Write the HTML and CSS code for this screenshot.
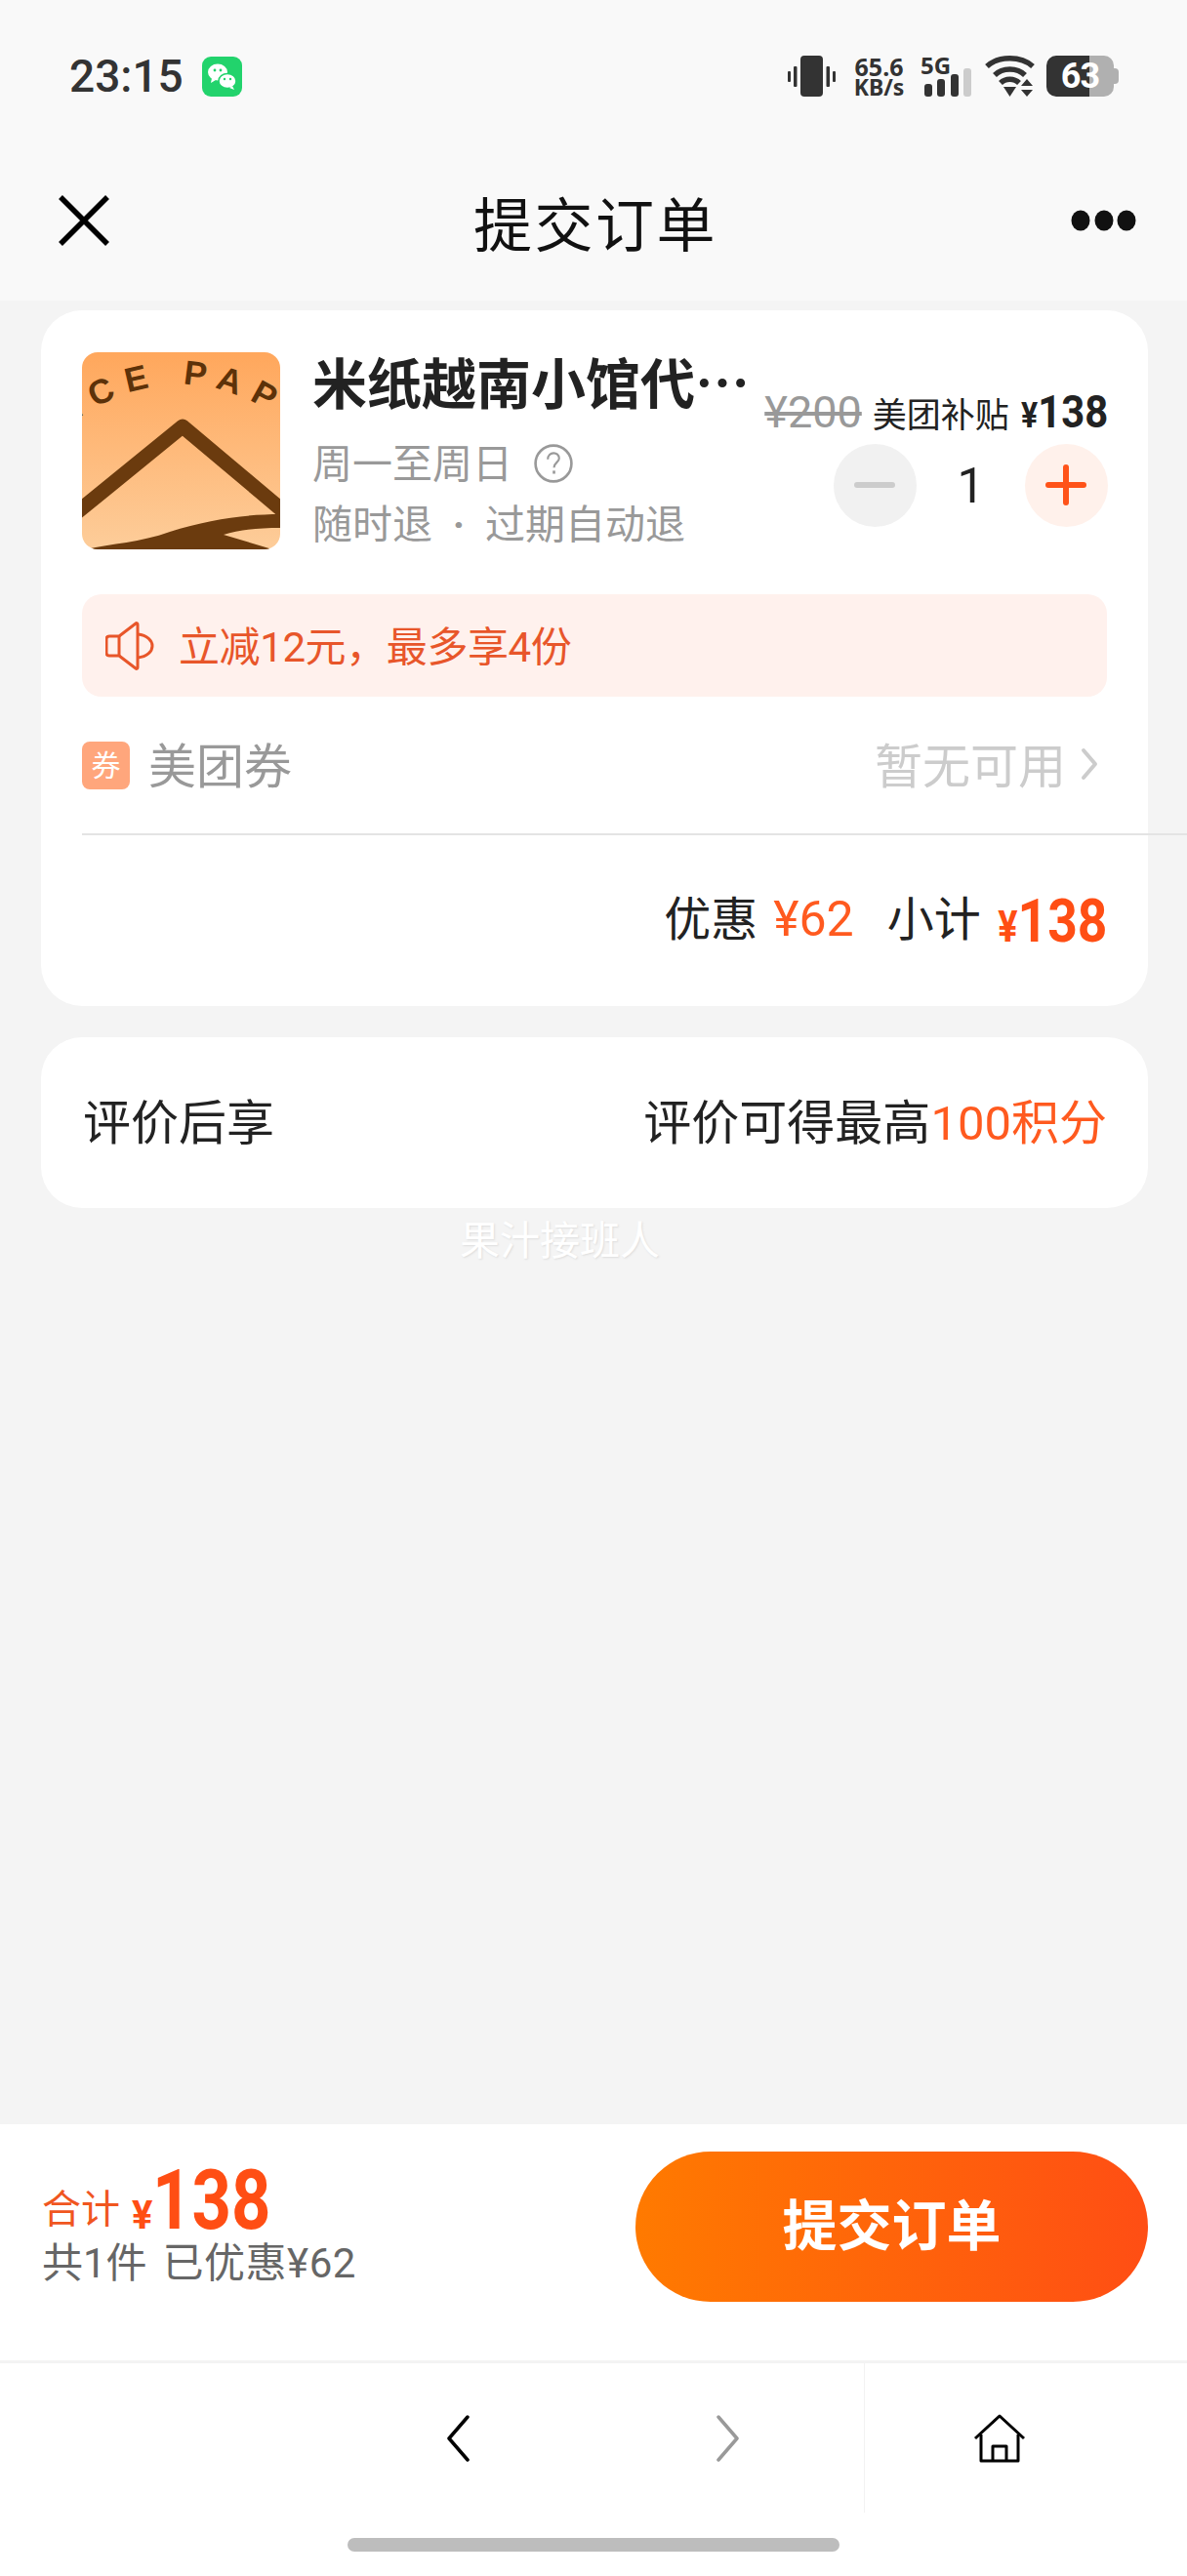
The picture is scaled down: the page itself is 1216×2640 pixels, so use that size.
FILE: index.html
```html
<!DOCTYPE html>
<html lang="zh-CN">
	<head>
		<meta charset="UTF-8" />
		<meta name="viewport" content="width=device-width, initial-scale=1.0" />
		<title>提交订单</title>
		<link rel="stylesheet" href="styles.css">
	</head>
	<body>
		<div id="page">
			<header class="top">
				<div class="status">
					<div class="status-left">
						<span class="time">23:15</span>
						<svg class="wechat" width="41" height="41" viewBox="0 0 41 41">
							<rect width="41" height="41" rx="9" fill="#22d36c"/>
							<ellipse cx="16" cy="16" rx="10" ry="8.5" fill="#fff"/>
							<path d="M10 22l-1 5 5-3z" fill="#fff"/>
							<ellipse cx="26" cy="25" rx="9" ry="7.5" fill="#fff" stroke="#22d36c" stroke-width="1.5"/>
							<path d="M31 30l2 4-5-2z" fill="#fff"/>
							<circle cx="13" cy="14" r="1.4" fill="#22d36c"/>
							<circle cx="19" cy="14" r="1.4" fill="#22d36c"/>
							<circle cx="23" cy="23" r="1.2" fill="#22d36c"/>
							<circle cx="29" cy="23" r="1.2" fill="#22d36c"/>
						</svg>
					</div>
					<div class="status-right">
						<svg width="49" height="42" viewBox="0 0 49 42" fill="#333">
							<rect x="13" y="0" width="23" height="42" rx="4"/>
							<rect x="0" y="16" width="3" height="11" rx="1"/>
							<rect x="6" y="11" width="3.5" height="21" rx="1"/>
							<rect x="39.5" y="11" width="3.5" height="21" rx="1"/>
							<rect x="46" y="16" width="3" height="11" rx="1"/>
						</svg>
						<div class="speed"><span>65.6</span><span>KB/s</span></div>
						<div class="signal">
							<span class="five-g">5G</span>
							<svg width="48" height="29" viewBox="0 0 48 29" fill="#333">
								<rect x="0" y="16" width="8" height="13" rx="3"/>
								<rect x="13" y="11" width="8" height="18" rx="3"/>
								<rect x="27" y="6" width="8" height="23" rx="3"/>
								<rect x="40" y="0" width="8" height="29" rx="3" fill="#ccc"/>
							</svg>
						</div>
						<svg class="wifi" width="51" height="42" viewBox="0 0 51 42">
							<g fill="none" stroke="#333" stroke-width="5.5">
								<path d="M2 11C14 0 37 0 49 11"/>
								<path d="M10 20C18 12 33 12 41 20"/>
								<path d="M16 28C21 23 30 23 35 28"/>
							</g>
							<path d="M19 32h13l-6.500 10z" fill="#333"/>
							<path d="M37 31l6-7 6 7z M37 35l6 7 6-7z" fill="#333"/>
						</svg>
						<div class="battery"><span class="battery-num">63</span></div>
					</div>
				</div>
				<nav class="navbar">
					<svg width="52" height="52" viewBox="0 0 52 52"><path d="M2 2l48 48M50 2L2 50" stroke="#000" stroke-width="5.500" fill="none"/></svg>
					<h1 class="title">提交订单</h1>
					<svg width="67" height="24" viewBox="0 0 67 24" fill="#111"><ellipse cx="10" cy="12" rx="9.500" ry="10.500"/><ellipse cx="34" cy="12" rx="9.500" ry="10.500"/><ellipse cx="57" cy="12" rx="9.500" ry="10.500"/></svg>
				</nav>
			</header>

			<main class="content">
				<section class="card order">
					<div class="goods">
						<svg class="thumb" width="203" height="202" viewBox="0 0 203 202">
							<defs>
								<linearGradient id="thumbBg" x1="0" y1="0" x2="0" y2="1">
									<stop offset="0" stop-color="#ffa75c"/>
									<stop offset="1" stop-color="#fdcd9a"/>
								</linearGradient>
								<path id="arc" d="M-40 96Q100 -30 240 96"/>
							</defs>
							<rect width="203" height="202" fill="url(#thumbBg)"/>
							<text class="thumb-text"><textPath href="#arc" startOffset="44">ICE PAPE</textPath></text>
							<path d="M-5 164L103 76L210 166" fill="none" stroke="#6b3b0e" stroke-width="15" stroke-linejoin="round"/>
							<path d="M4 202C30 196 60 195 90 184C130 171 170 166 203 166V180C180 180 160 182 145 187L195 202z" fill="#6b3b0e"/>
						</svg>
						<div class="goods-info">
							<div class="goods-name">米纸越南小馆代…</div>
							<div class="goods-sub">周一至周日
								<svg class="help" width="40" height="40" viewBox="0 0 38 38" fill="none" stroke="#999" stroke-width="2.500"><circle cx="19" cy="19" r="17.500"/><path d="M13.500 15c0-8 11-8 11-1 0 4-5 4-5 9" stroke-width="2"/><path d="M19.500 26v3" stroke-width="2.500"/></svg>
							</div>
							<div class="goods-sub">随时退<span class="sub-dot">·</span>过期自动退</div>
						</div>
						<div class="buy">
							<div class="prices">
								<s class="old-price">¥200</s>
								<span class="subsidy">美团补贴</span>
								<span class="new-price"><i>¥</i>138</span>
							</div>
							<div class="stepper">
								<span class="step minus"></span>
								<span class="qty">1</span>
								<span class="step plus"></span>
							</div>
						</div>
					</div>

					<div class="notice">
						<svg width="50" height="50" viewBox="0 0 50 50" fill="none" stroke="#e8562a" stroke-width="3" stroke-linejoin="round"><path d="M4 15h10L31 2c1-1 2 0 2 1v44c0 1-1 2-2 1L14 35H4c-2 0-3-1-3-3V18c0-2 1-3 3-3z"/><path d="M14 15v20"/><path d="M33 13c20 2 20 22 0 24"/></svg>
						<span class="notice-text">立减12元，最多享4份</span>
					</div>

					<div class="coupon">
						<span class="coupon-tag">券</span>
						<span class="coupon-name">美团券</span>
						<span class="coupon-state">暂无可用</span>
						<svg class="coupon-arrow" width="18" height="34" viewBox="0 0 18 34" fill="none" stroke="#ccc" stroke-width="4" stroke-linecap="round" stroke-linejoin="round"><path d="M3 3l12 14L3 31"/></svg>
					</div>

					<div class="divider"></div>

					<div class="sum">
						<span>优惠</span>
						<span class="discount">¥62</span>
						<span class="sum-label">小计</span>
						<span class="sum-total"><i>¥</i>138</span>
					</div>
				</section>

				<section class="card review">
					<span>评价后享</span>
					<span>评价可得最高<em>100积分</em></span>
				</section>

				<div class="watermark">果汁接班人</div>
			</main>

			<div class="submit-bar">
				<div class="total">
					<div class="total-line">
						<span class="total-label">合计</span>
						<span class="total-yen">¥</span>
						<span class="total-num">138</span>
					</div>
					<div class="total-note"><span>共1件</span><span class="total-saved">已优惠¥62</span></div>
				</div>
				<div class="submit-btn">提交订单</div>
			</div>

			<div class="browser-bar">
				<div class="arrows">
					<svg width="24" height="48" viewBox="0 0 24 48" fill="none" stroke="#000" stroke-width="3.500" stroke-linecap="round" stroke-linejoin="round"><path d="M22 2L3 24l19 22"/></svg>
					<svg width="24" height="48" viewBox="0 0 24 48" fill="none" stroke="#999" stroke-width="3.500" stroke-linecap="round" stroke-linejoin="round"><path d="M2 2l19 22L2 46"/></svg>
				</div>
				<div class="home">
					<svg width="54" height="50" viewBox="0 0 54 50" fill="none" stroke="#000" stroke-width="3" stroke-linejoin="round"><path d="M2 25L27 2l25 23"/><path d="M8 21v27h38V21"/><path d="M20 48V33h14v15"/></svg>
				</div>
			</div>
			<div class="indicator-row"><span class="indicator"></span></div>
		</div>
	</body>
</html>
```

FILE: styles.css
```css
* {
	box-sizing: border-box;
}
body {
	margin: 0;
	font-family: Roboto, "Noto Sans CJK SC", sans-serif;
	color: #222;
}
i,
em {
	font-style: normal;
}
svg {
	display: block;
	flex: none;
}
#page {
	width: 1216px;
	height: 2640px;
	display: flex;
	flex-direction: column;
	overflow: hidden;
	background-color: #f4f4f4;
}

/* status bar and title */
.top {
	height: 308px;
	padding: 57px 70px 0 71px;
	background-color: #f9f9f9;
}
.status {
	display: flex;
	justify-content: space-between;
	height: 42px;
}
.status-left {
	display: flex;
	align-items: center;
	gap: 19px;
}
.time {
	font-size: 46px;
	font-weight: 500;
	color: #333;
}
.status-right {
	display: flex;
	align-items: center;
	gap: 19px;
}
.speed {
	width: 51px;
	display: flex;
	flex-direction: column;
	align-items: center;
	font-family: "Noto Sans", sans-serif;
	font-size: 23px;
	font-weight: 700;
	line-height: 20px;
	color: #333;
	white-space: nowrap;
}
.speed span:first-child {
	font-size: 25px;
	line-height: 22px;
}
.signal {
	position: relative;
	width: 50px;
	height: 42px;
	display: flex;
	justify-content: flex-end;
	align-items: flex-end;
}
.five-g {
	position: absolute;
	left: -2px;
	top: -4px;
	font-family: "Noto Sans", sans-serif;
	font-size: 24px;
	line-height: 28px;
	font-weight: 700;
	color: #333;
}
.wifi {
	margin-left: -5px;
}
.battery {
	position: relative;
	width: 69px;
	height: 42px;
	margin-left: -7px;
	margin-right: 5px;
	border-radius: 10px;
	background: linear-gradient(90deg, #333 44px, #b0b0b0 44px);
	display: flex;
	align-items: center;
	justify-content: center;
}
.battery::after {
	content: "";
	position: absolute;
	right: -5px;
	top: 13px;
	width: 5px;
	height: 16px;
	border-radius: 0 4px 4px 0;
	background-color: #b0b0b0;
}
.battery-num {
	font-size: 36px;
	font-weight: 700;
	letter-spacing: -1px;
	color: #fff;
}
.navbar {
	display: flex;
	justify-content: space-between;
	align-items: center;
	height: 100px;
	margin: 77px -18px 0 -11px;
}
.title {
	margin: 0 0 0 11px;
	font-size: 60px;
	font-weight: 400;
	letter-spacing: 2.500px;
	color: #111;
}

/* cards */
.content {
	flex: 1;
	padding: 10px 40px 0 42px;
}
.card {
	background-color: #fff;
	border-radius: 42px;
}
.order {
	height: 713px;
	padding: 43px 42px 0;
}
.goods {
	display: flex;
	height: 202px;
}
.thumb {
	border-radius: 16px;
}
.thumb-text {
	font-family: "Liberation Sans", sans-serif;
	font-size: 35px;
	font-weight: 700;
	letter-spacing: 12px;
	fill: #5d3209;
}
.goods-info {
	width: 460px;
	padding-left: 33px;
}
.goods-name {
	font-family: "Noto Sans CJK SC", sans-serif;
	font-size: 56px;
	font-weight: 700;
	line-height: 68px;
	white-space: nowrap;
	margin: -5px 0 21px;
}
.goods-sub {
	display: flex;
	align-items: center;
	gap: 22px;
	height: 62px;
	font-size: 41px;
	line-height: 62px;
	color: #999;
	white-space: nowrap;
}
.sub-dot {
	width: 54px;
	margin: 0 -22px;
	text-align: center;
	font-weight: 700;
}
.help {
	margin-top: -2px;
}
.buy {
	flex: 1;
	display: flex;
	flex-direction: column;
	align-items: flex-end;
	margin-right: -1px;
}
.prices {
	display: flex;
	align-items: baseline;
	gap: 11px;
	height: 52px;
	margin-top: 35px;
	white-space: nowrap;
	line-height: 52px;
}
.old-price {
	font-size: 45px;
	color: #999;
}
.subsidy {
	font-size: 35px;
}
/* the app's digits are condensed, no narrow family is installed */
.new-price {
	display: inline-block;
	margin-left: -10px;
	font-size: 47px;
	font-weight: 700;
	transform: scaleX(0.89);
	transform-origin: right;
}
.new-price i {
	font-size: 36px;
}
.stepper {
	display: flex;
	align-items: center;
	margin-top: 7px;
}
.step {
	position: relative;
	width: 85px;
	height: 85px;
	border-radius: 50%;
	background-color: #f1f1f1;
}
.step::before,
.step::after {
	content: "";
	position: absolute;
	left: 21px;
	top: 39px;
	width: 42px;
	height: 6px;
	border-radius: 3px;
	background-color: #ccc;
}
.step::after {
	display: none;
}
.plus {
	background-color: #fff1eb;
}
.plus::before,
.plus::after {
	background-color: #ff5319;
}
.plus::after {
	display: block;
	left: 39px;
	top: 21px;
	width: 6px;
	height: 42px;
}
.qty {
	width: 111px;
	text-align: center;
	font-size: 50px;
}
.notice {
	display: flex;
	align-items: center;
	gap: 25px;
	height: 105px;
	margin-top: 46px;
	padding-left: 24px;
	border-radius: 20px;
	background-color: #fff1ed;
	font-size: 42px;
	color: #e8562a;
}
.notice-text {
	margin-top: -5px;
	letter-spacing: -0.4px;
}
.coupon {
	display: flex;
	align-items: center;
	height: 140px;
	font-size: 49px;
	padding-right: 9px;
}
.coupon-tag {
	width: 49px;
	height: 49px;
	border-radius: 8px;
	background-color: #ffa67c;
	color: #fff;
	font-size: 30px;
	line-height: 49px;
	text-align: center;
}
.coupon-name {
	margin: -6px 0 0 19px;
	color: #999;
}
.coupon-state {
	margin: -6px 15px 0 auto;
	color: #ccc;
}
.coupon-arrow {
	margin-top: -3px;
}
.divider {
	height: 2px;
	margin-right: -82px;
	background-color: #e4e4e4;
}
.sum {
	display: flex;
	justify-content: flex-end;
	align-items: baseline;
	height: 100px;
	margin-top: 32px;
	font-size: 48px;
	line-height: 100px;
}
.discount {
	margin-left: 16px;
	font-size: 50px;
	color: #ff5a1f;
}
.sum-label {
	margin-left: 34px;
}
.sum-total {
	display: inline-block;
	margin-left: -1px;
	font-size: 62px;
	font-weight: 700;
	color: #ff4e14;
	transform: translateY(6px) scaleX(0.86);
	transform-origin: right;
}
.sum-total i {
	font-size: 44px;
}
.review {
	display: flex;
	justify-content: space-between;
	align-items: center;
	height: 175px;
	margin-top: 32px;
	padding: 0 42px 8px 43px;
	font-size: 49px;
}
.review em {
	color: #ff5a1f;
}
.watermark {
	margin: 10px 0 0 429px;
	font-size: 41px;
	line-height: 48px;
	color: #fff;
	text-shadow: 1px 1px 2px #ddd;
}

/* bottom bars */
.submit-bar {
	display: flex;
	justify-content: space-between;
	align-items: flex-start;
	height: 245px;
	padding: 28px 40px 0 43px;
	background-color: #fff;
	border-bottom: 3px solid #f3f3f3;
}
.total {
	padding-top: 10px;
}
.total-line {
	display: flex;
	align-items: baseline;
	height: 81px;
	color: #f0561f;
}
.total-label {
	font-size: 40px;
	line-height: 50px;
	transform: translateY(-6px);
}
.total-yen {
	margin-left: 12px;
	font-size: 40px;
	font-weight: 700;
	line-height: 50px;
	color: #ff4e14;
}
.total-num {
	display: inline-block;
	font-size: 86px;
	font-weight: 700;
	line-height: 80px;
	color: #ff4e14;
	transform: scaleX(0.82);
	transform-origin: left;
}
.total-note {
	display: flex;
	gap: 16px;
	font-size: 42px;
	line-height: 48px;
	color: #666;
	white-space: nowrap;
}
.total-saved {
	letter-spacing: 0.5px;
}
.submit-btn {
	width: 525px;
	height: 154px;
	border-radius: 77px;
	background: linear-gradient(90deg, #ff7a00, #ff4e14);
	color: #fff;
	font-size: 56px;
	font-weight: 700;
	line-height: 154px;
	text-align: center;
}
.browser-bar {
	display: flex;
	height: 153px;
	background-color: #fff;
}
.arrows {
	width: 886px;
	border-right: 1px solid #f2f2f2;
	display: flex;
	align-items: center;
	gap: 253px;
	padding-left: 457px;
}
.home {
	flex: 1;
	display: flex;
	align-items: center;
	padding-left: 111px;
}
.indicator-row {
	flex: none;
	height: 65px;
	padding-top: 26px;
	background-color: #fff;
}
.indicator {
	display: block;
	width: 504px;
	height: 14px;
	margin-left: 356px;
	border-radius: 7px;
	background-color: #bdbdbd;
}
```
